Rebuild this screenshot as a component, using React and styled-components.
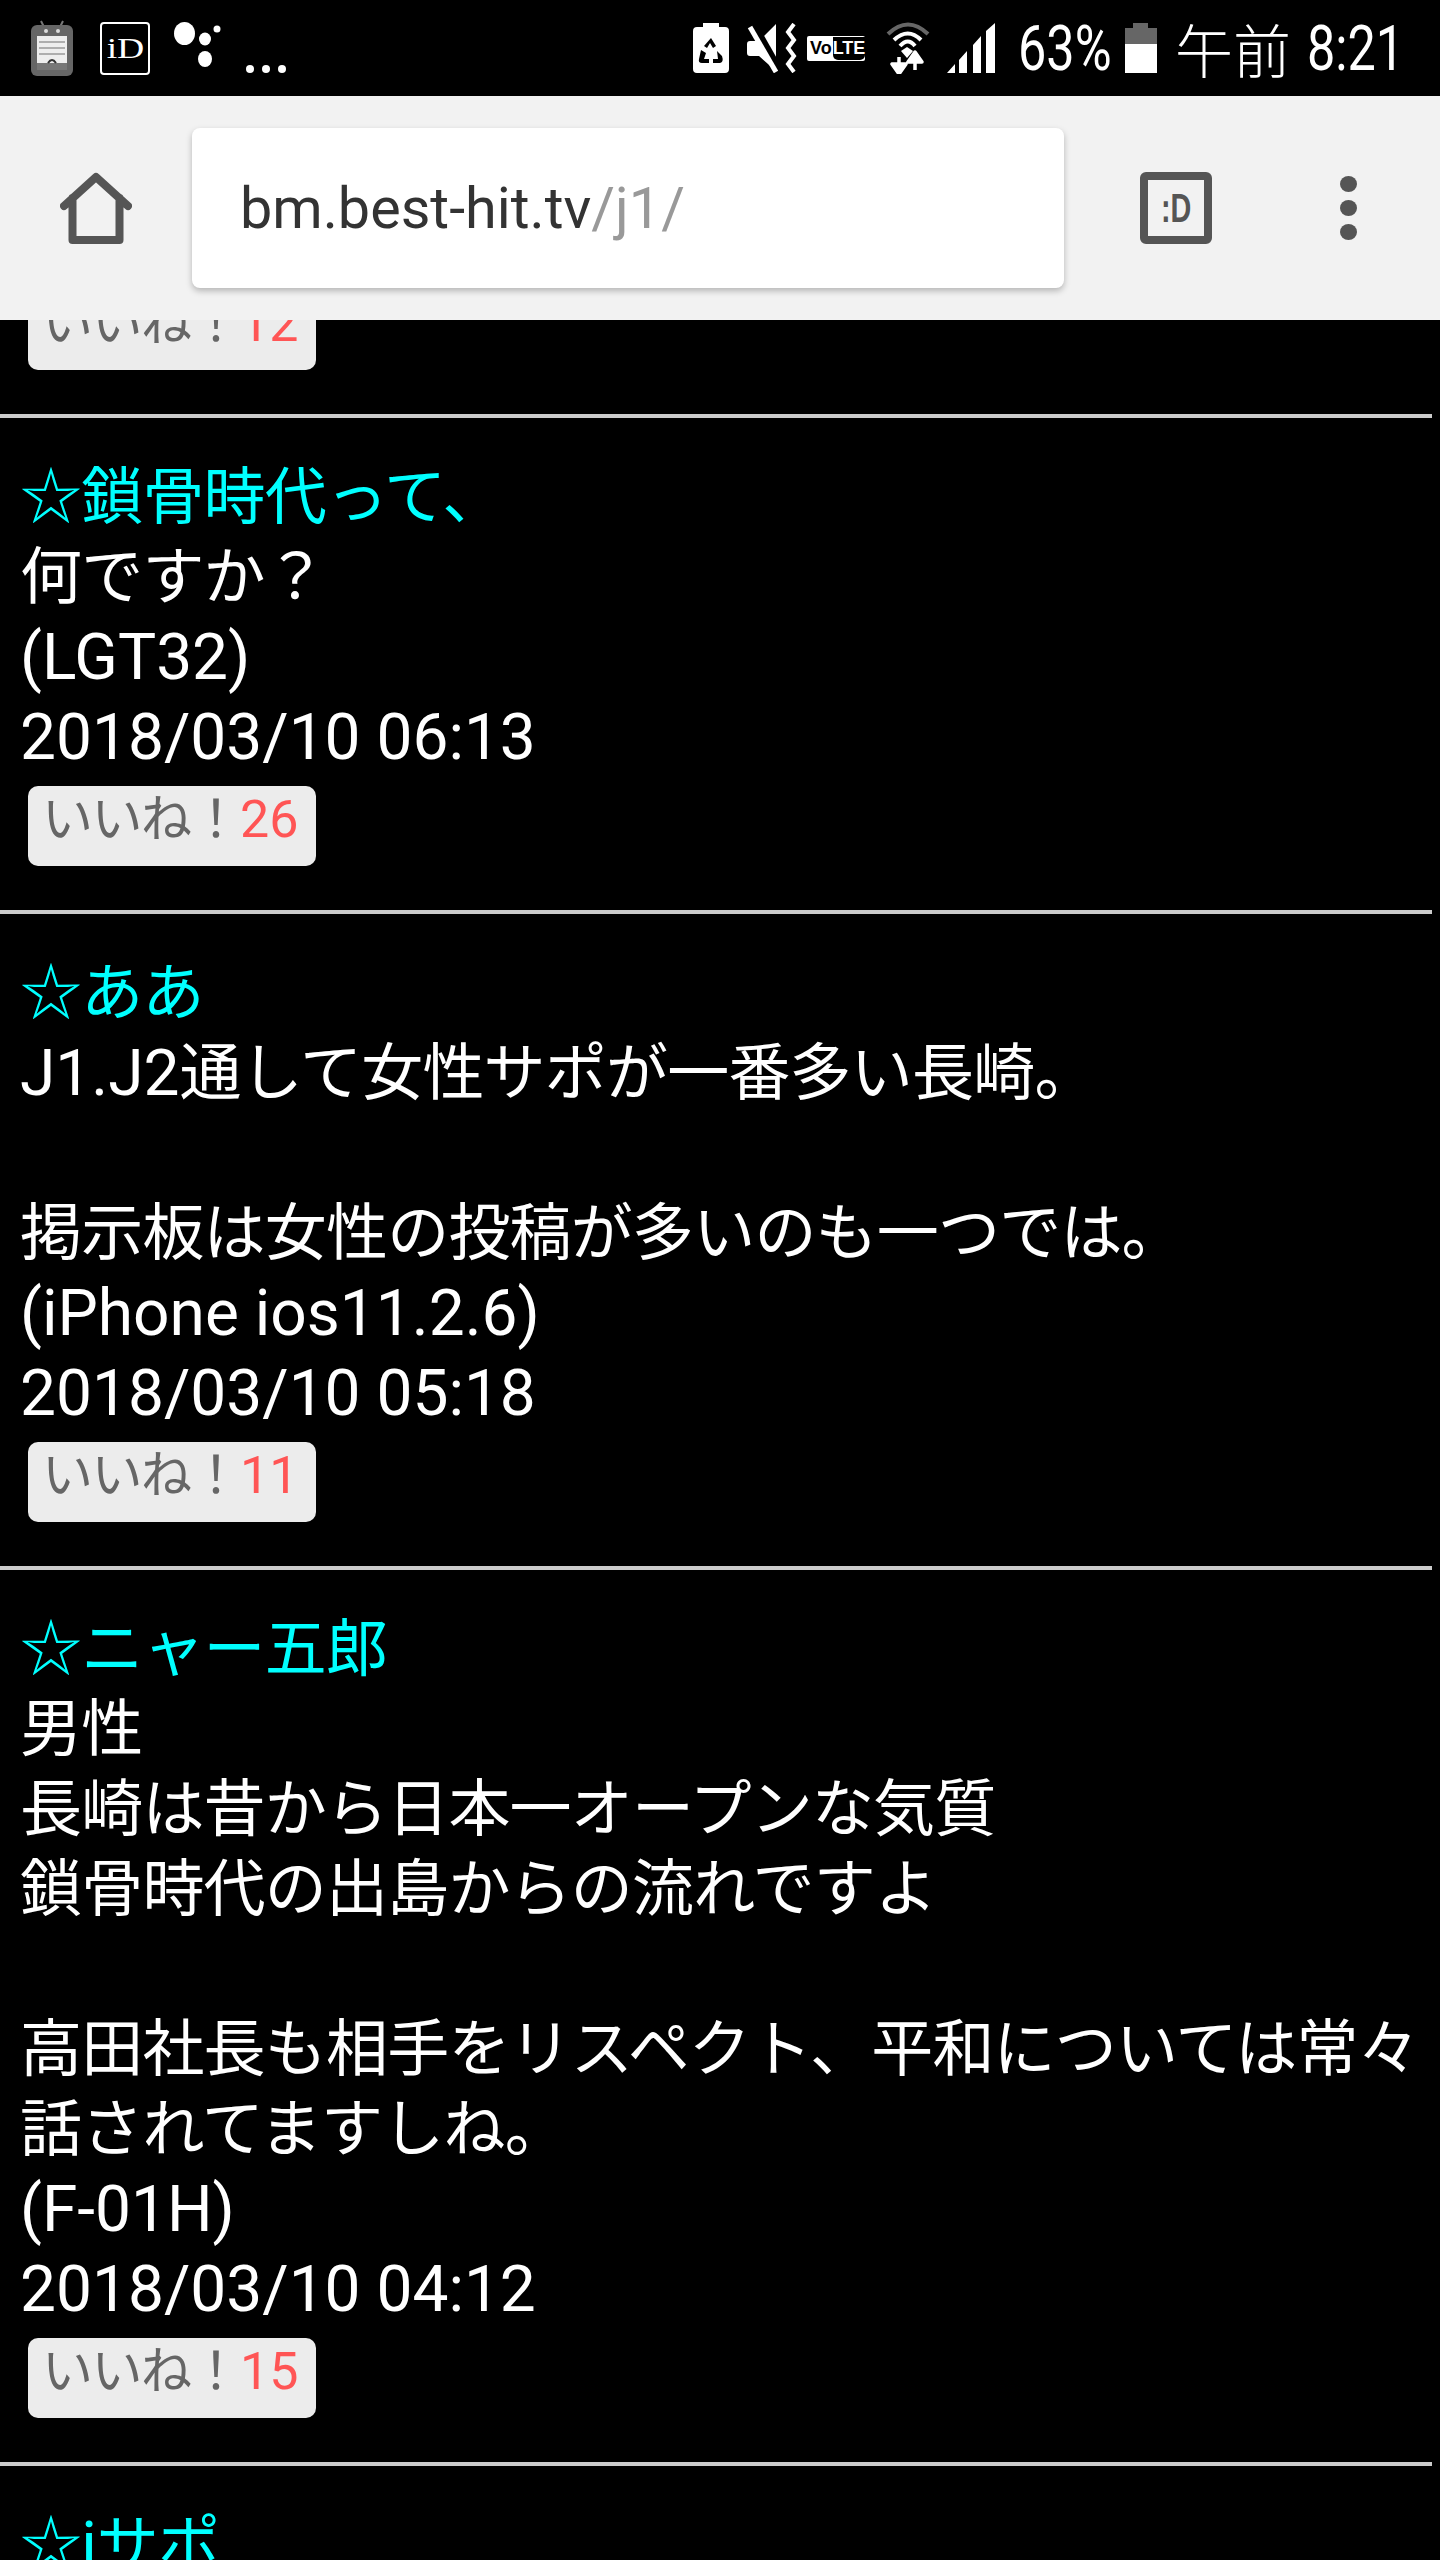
import React from 'react';
import styled, { createGlobalStyle } from 'styled-components';

const GlobalStyle = createGlobalStyle`
  html, body { margin: 0; padding: 0; background: #000; }
  body { font-family: Roboto, "Noto Sans CJK JP", sans-serif; }
`;

const posts = [
  {
    name: '鎖骨時代って、',
    lines: ['何ですか？', '(LGT32)', '2018/03/10 06:13'],
    likes: 26,
  },
  {
    name: 'ああ',
    lines: ['J1.J2通して女性サポが一番多い長崎。', '', '掲示板は女性の投稿が多いのも一つでは。', '(iPhone ios11.2.6)', '2018/03/10 05:18'],
    likes: 11,
  },
  {
    name: 'ニャー五郎',
    lines: [
      '男性',
      '長崎は昔から日本一オープンな気質',
      '鎖骨時代の出島からの流れですよ',
      '',
      '高田社長も相手をリスペクト、平和については常々',
      '話されてますしね。',
      '(F-01H)',
      '2018/03/10 04:12',
    ],
    likes: 15,
  },
];

// the phone's japanese font runs a bit narrower than Noto, so those runs get their own span
function Mixed({ text }) {
  const runs = text.split(/([\u2600-\u2606\u3000-\u9fff\uff00-\uffef]+)/).filter(Boolean);
  return runs.map((run, i) =>
    /^[\u2600-\u2606\u3000-\u9fff\uff00-\uffef]/.test(run) ? <Cjk key={i}>{run}</Cjk> : <span key={i}>{run}</span>
  );
}

function Like({ count }) {
  return (
    <LikeButton>
      <LikeLabel>いいね！</LikeLabel>
      <LikeCount>{count}</LikeCount>
    </LikeButton>
  );
}

export default function App() {
  return (
    <Page>
      <GlobalStyle />
      <Header>
        <StatusBar>
          <StatusGroup>
            <NotifyIcon />
            <StatusItem $gap={27}><IdBadge><IdText>iD</IdText></IdBadge></StatusItem>
            <StatusItem $gap={24}><AssistantIcon /></StatusItem>
            <StatusItem $gap={24}>
              <MoreDots viewBox="0 0 40 8" width="40" height="8">
                <ellipse cx="4" cy="4" rx="4" ry="4" fill="#fff" />
                <ellipse cx="20" cy="4" rx="4" ry="4" fill="#fff" />
                <ellipse cx="36" cy="4" rx="4" ry="4" fill="#fff" />
              </MoreDots>
            </StatusItem>
          </StatusGroup>
          <StatusGroup>
            <SaverIcon />
            <StatusItem $gap={18}><MuteIcon /></StatusItem>
            <StatusItem $gap={10}>
              <VolteBadge><VoText>Vo</VoText><LteBox>LTE</LteBox></VolteBadge>
            </StatusItem>
            <StatusItem $gap={21}><WifiIcon /></StatusItem>
            <StatusItem $gap={17}><SignalIcon /></StatusItem>
            <StatusItem $gap={23}><Percent>63%</Percent></StatusItem>
            <StatusItem $gap={15}><BatteryIcon /></StatusItem>
            <StatusItem $gap={18}>
              <Clock><ClockKana>午前</ClockKana><ClockDigits>8:21</ClockDigits></Clock>
            </StatusItem>
          </StatusGroup>
        </StatusBar>
        <Toolbar>
          <IconSlot $width={192}>
            <svg width="72" height="72" viewBox="0 0 72 72" fill="none" stroke="#555" strokeWidth="8" strokeLinejoin="round" strokeLinecap="round">
              <path d="M4 34 L36 5 L68 34 M12.5 26 V68 H59.5 V26" />
            </svg>
          </IconSlot>
          <UrlBox>
            <UrlHost>bm.best-hit.tv</UrlHost>
            <UrlPath>/j1/</UrlPath>
          </UrlBox>
          <IconSlot $width={224}>
            <TabCount><TabText>:D</TabText></TabCount>
          </IconSlot>
          <IconSlot $width={120}>
            <MenuDots>
              <i /><i /><i />
            </MenuDots>
          </IconSlot>
        </Toolbar>
      </Header>

      <Feed>
        <Post $clipped>
          <Like count={12} />
        </Post>
        {posts.map((post) => (
          <Post key={post.name}>
            <Name><Mixed text={'☆' + post.name} /></Name>
            {post.lines.map((line, i) => (
              <Line key={i}>{line ? <Mixed text={line} /> : '\u00a0'}</Line>
            ))}
            <Like count={post.likes} />
          </Post>
        ))}
        <Post>
          <Name><Mixed text="☆iサポ" /></Name>
        </Post>
      </Feed>
    </Page>
  );
}

function NotifyIcon() {
  return (
    <svg width="42" height="56" viewBox="0 0 42 56">
      <path d="M10 1 L13 7 M32 1 L29 7" stroke="#777" strokeWidth="2" />
      <rect x="0" y="5" width="42" height="51" rx="6" fill="#666" />
      <rect x="6" y="16" width="30" height="34" fill="#eee" />
      <path d="M8 22 H34 M8 28 H34 M8 34 H34" stroke="#999" strokeWidth="1.5" />
      <rect x="6" y="43" width="30" height="7" fill="#777" />
      <path d="M17 43 Q21 37 25 43" stroke="#333" strokeWidth="2" fill="none" />
      <circle cx="15" cy="11" r="2" fill="#ddd" />
      <circle cx="27" cy="11" r="2" fill="#ddd" />
    </svg>
  );
}

function AssistantIcon() {
  return (
    <svg width="48" height="52" viewBox="0 0 48 52" fill="#fff">
      <ellipse cx="10.5" cy="11.5" rx="10.5" ry="11.5" />
      <ellipse cx="31" cy="17" rx="6" ry="6.5" />
      <ellipse cx="43" cy="7" rx="3.5" ry="3.5" />
      <ellipse cx="31" cy="37" rx="7" ry="8" />
    </svg>
  );
}

function SaverIcon() {
  return (
    <svg width="36" height="50" viewBox="0 0 36 50">
      <path d="M10 0 H26 V4 H32 Q36 4 36 8 V46 Q36 50 32 50 H4 Q0 50 0 46 V8 Q0 4 4 4 H10 Z" fill="#fff" />
      <path d="M18 15 L23 23 L20 25 L17 20 L14 25 L11 23 Z M8 27 L13 30 L11 36 H16 V40 H9 Q5 40 6 36 Z M24 28 L29 33 Q31 39 27 40 H20 V36 H25 Z" fill="#000" />
    </svg>
  );
}

function MuteIcon() {
  return (
    <svg width="50" height="50" viewBox="0 0 50 50" fill="none">
      <path d="M0 21 Q0 18 3 18 H12 L29 1 V48 L12 33 H3 Q0 33 0 30 Z" fill="#fff" />
      <path d="M7 1 L33 47" stroke="#000" strokeWidth="6" />
      <path d="M3 4 L29 49" stroke="#fff" strokeWidth="5" />
      <path d="M47 1 L41 9 L47 17 L41 25 L47 33 L41 41 L47 49" stroke="#fff" strokeWidth="4" />
    </svg>
  );
}

function WifiIcon() {
  return (
    <svg width="44" height="52" viewBox="0 0 44 52" fill="none">
      <path d="M2 12 Q22 -7 42 12" stroke="#666" strokeWidth="4" />
      <path d="M8 18 Q22 5 35 18" stroke="#fff" strokeWidth="4" />
      <path d="M14 24 Q22 15 29 24" stroke="#fff" strokeWidth="4" />
      <path d="M21 36 L15 29 L21 25 L27 29 Z" fill="#fff" />
      <path d="M13 35 V46 M6 42 H20 L13 52 Z M29 48 V38 M22 40 H36 L29 30 Z" stroke="#fff" strokeWidth="3.5" fill="#fff" strokeLinejoin="round" />
    </svg>
  );
}

function SignalIcon() {
  return (
    <svg width="48" height="50" viewBox="0 0 48 50" fill="#fff">
      <path d="M0 50 L8 41 V50 Z M12 50 V37 L20 28 V50 Z M26 50 V22 L34 13 V50 Z M39 50 V8 L48 0 V50 Z" />
    </svg>
  );
}

function BatteryIcon() {
  return (
    <svg width="32" height="50" viewBox="0 0 32 50">
      <path d="M8 0 H23 V5 H32 V21 H0 V5 H8 Z" fill="#666" />
      <rect x="0" y="21" width="32" height="29" fill="#fff" />
    </svg>
  );
}

const Page = styled.div`
  width: 1440px;
  height: 2560px;
  overflow: hidden;
  background: #000;
  color: #fff;
`;

const Header = styled.header`
  position: relative;
  z-index: 2;
`;

const StatusBar = styled.div`
  height: 96px;
  background: #000;
  display: flex;
  justify-content: space-between;
  align-items: center;
  padding: 0 43px 0 31px;
  box-sizing: border-box;
`;

const StatusGroup = styled.div`
  display: flex;
  align-items: center;
`;

const StatusItem = styled.div`
  display: flex;
  align-items: center;
  margin-left: ${(props) => props.$gap}px;
`;

const IdBadge = styled.div`
  width: 50px;
  height: 53px;
  box-sizing: border-box;
  border: 2px solid #fff;
  border-radius: 4px;
  display: flex;
  align-items: center;
  justify-content: center;
  font: 29px "Liberation Serif", serif;
  color: #fff;
`;

const IdText = styled.span`
  display: inline-block;
  transform: scaleX(1.3);
`;

const MoreDots = styled.svg`
  margin-top: 42px;
`;

const VolteBadge = styled.div`
  width: 58px;
  height: 25px;
  background: #fff;
  display: flex;
  align-items: center;
  font: 700 18px "Liberation Sans Narrow", "Liberation Sans", sans-serif;
  padding: 1px 1px 1px 3px;
  box-sizing: border-box;
  border-radius: 2px;
`;

const VoText = styled.span`
  color: #000;
`;

const LteBox = styled.span`
  flex: 1;
  height: 100%;
  margin-left: 1px;
  background: #000;
  color: #fff;
  border-radius: 0 0 5px 5px;
  text-align: center;
  line-height: 23px;
`;

const Percent = styled.div`
  font: 400 63px Roboto, sans-serif;
  width: 92px;
  color: #fff;
  transform: scaleX(0.8);
  transform-origin: left center;
  white-space: nowrap;
`;

const Clock = styled.div`
  display: flex;
  align-items: center;
  gap: 16px;
  color: #fff;
  white-space: nowrap;
`;

const ClockKana = styled.span`
  font: 300 58px "Noto Sans CJK JP", sans-serif;
`;

const ClockDigits = styled.span`
  display: inline-block;
  width: 90px;
  font: 400 63px Roboto, sans-serif;
  transform: scaleX(0.8);
  transform-origin: left center;
`;

const Toolbar = styled.div`
  height: 224px;
  background: #f2f2f2;
  display: flex;
  align-items: center;
`;

const IconSlot = styled.div`
  width: ${(props) => props.$width}px;
  display: flex;
  justify-content: center;
  align-items: center;
`;

const UrlBox = styled.div`
  width: 872px;
  height: 160px;
  box-sizing: border-box;
  background: #fff;
  border-radius: 8px;
  box-shadow: 0 3px 6px rgba(0, 0, 0, 0.25);
  padding-left: 48px;
  display: flex;
  align-items: center;
  font: 400 57.5px Roboto, sans-serif;
`;

const UrlHost = styled.span`
  color: #333;
`;

const UrlPath = styled.span`
  color: #999;
`;

const TabCount = styled.div`
  width: 72px;
  height: 72px;
  box-sizing: border-box;
  border: 8px solid #555;
  border-radius: 6px;
  color: #555;
  display: flex;
  align-items: center;
  justify-content: center;
  font: 700 40px "Liberation Sans", sans-serif;
`;

const TabText = styled.span`
  display: inline-block;
  transform: scaleX(0.72);
`;

const MenuDots = styled.div`
  display: flex;
  flex-direction: column;
  gap: 8px;
  i {
    display: block;
    width: 17px;
    height: 16px;
    border-radius: 50%;
    background: #555;
  }
`;

const Feed = styled.main`
  width: 1432px;
`;

const Post = styled.article`
  padding: 40px 0 44px 20px;
  border-bottom: 4px solid #ccc;
  ${(props) => props.$clipped && 'padding-top: 0; margin-top: -38px;'}
`;

const Name = styled.div`
  font-size: 64px;
  line-height: 80px;
  height: 80px;
  color: #0ff;
  white-space: nowrap;
`;

const Line = styled.div`
  font-size: 64px;
  line-height: 80px;
  height: 80px;
  color: #fff;
  white-space: nowrap;
`;

const Cjk = styled.span`
  font-size: 62px;
  letter-spacing: -0.8px;
`;

const LikeButton = styled.div`
  width: 288px;
  height: 80px;
  margin: 8px 0 0 8px;
  box-sizing: border-box;
  padding-left: 14px;
  background: #ececec;
  border-radius: 10px;
  color: #666;
  font-size: 52px;
  line-height: 68px;
  white-space: nowrap;
`;

const LikeLabel = styled.span`
  font-size: 51px;
  letter-spacing: -1.5px;
`;

const LikeCount = styled.span`
  color: #f55;
`;
